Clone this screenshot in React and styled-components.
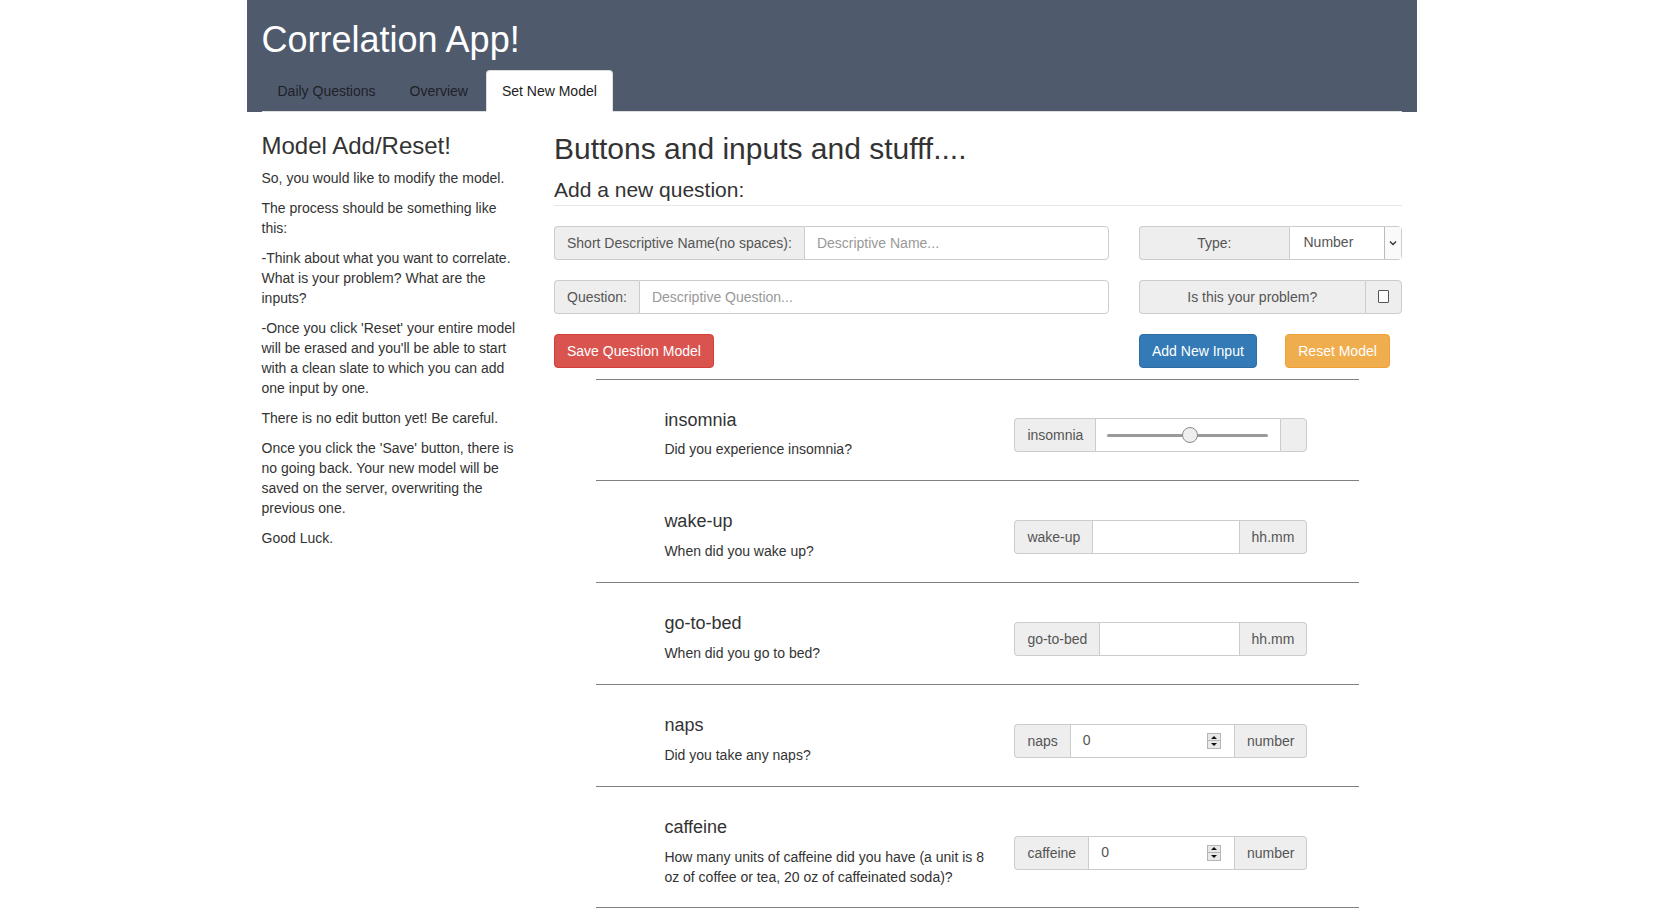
import React from "react";
import styled, { createGlobalStyle } from "styled-components";

const GlobalStyle = createGlobalStyle`
  html, body { margin: 0; padding: 0; background: #fff; }
  body {
    font-family: "Liberation Sans", Arial, Helvetica, sans-serif;
    font-size: 14px;
    line-height: 1.428571;
    color: #333;
  }
  * { box-sizing: border-box; }
`;

const Container = styled.div`
  width: 1170px;
  margin: 0 auto;
  padding: 0 15px;
`;

const Header = styled(Container)`
  display: flow-root;
  background: #505a6d;
`;

const AppTitle = styled.h1`
  margin: 20px 0 10px;
  font-size: 36px;
  font-weight: 500;
  line-height: 1.1;
  color: #fff;
`;

const Tabs = styled.ul`
  display: flex;
  margin: 0;
  padding: 0;
  list-style: none;
  border-bottom: 1px solid #ddd;
`;

const Tab = styled.li`
  margin-bottom: -1px;
`;

const TabLink = styled.a`
  display: block;
  margin-right: 2px;
  padding: 10px 15px;
  line-height: 20px;
  border: 1px solid ${(p) => (p.$active ? "#ddd" : "transparent")};
  border-bottom-color: transparent;
  border-radius: 4px 4px 0 0;
  background: ${(p) => (p.$active ? "#fff" : "transparent")};
  color: ${(p) => (p.$active ? "#222" : "#1e2128")};
  text-decoration: none;
  cursor: pointer;
`;

const Main = styled(Container)`
  display: grid;
  grid-template-columns: 262.5px 1fr;
  column-gap: 30px;
  align-items: start;
`;

const Sidebar = styled.div`
  padding-top: 1px;
`;

const SideTitle = styled.h3`
  margin: 20px 0 10px;
  font-size: 24px;
  font-weight: 500;
  line-height: 1.1;
`;

const SideText = styled.p`
  margin: 0 0 10px;
`;

const Content = styled.div``;

const PageTitle = styled.h2`
  margin: 20px 0 10px;
  font-size: 30px;
  font-weight: 500;
  line-height: 1.1;
`;

const Legend = styled.div`
  margin-bottom: 20px;
  font-size: 21px;
  line-height: 30px;
  color: #333;
  border-bottom: 1px solid #e5e5e5;
`;

const FormGrid = styled.div`
  display: grid;
  grid-template-columns: 555px 262.5px;
  column-gap: 30px;
  row-gap: 20px;
`;

const InputGroup = styled.div`
  display: flex;
  height: 34px;
  width: ${(p) => p.$width || "auto"};
`;

const Addon = styled.span`
  display: flex;
  align-items: center;
  justify-content: center;
  flex: ${(p) => (p.$grow ? "1 1 auto" : "none")};
  width: ${(p) => p.$width || "auto"};
  padding: 6px 12px;
  font-size: 14px;
  line-height: 1;
  color: #555;
  background: #eee;
  border: 1px solid #ccc;
  white-space: nowrap;
  &:first-child {
    border-radius: 4px 0 0 4px;
    border-right: 0;
  }
  &:last-child {
    border-radius: 0 4px 4px 0;
    border-left: ${(p) => (p.$divider ? "1px solid #ccc" : "0")};
  }
`;

const TextInput = styled.input`
  flex: 1 1 auto;
  min-width: 0;
  height: 34px;
  padding: 6px 12px;
  font-family: inherit;
  font-size: 14px;
  color: #555;
  background: #fff;
  border: 1px solid #ccc;
  outline: none;
  &:last-child { border-radius: 0 4px 4px 0; }
  &::placeholder { color: #999; }
`;

const SelectBox = styled.div`
  display: flex;
  align-items: stretch;
  width: 113px;
  flex: none;
  background: #fff;
  border: 1px solid #ccc;
  border-radius: 0 4px 4px 0;
  color: #555;
`;

const SelectText = styled.span`
  flex: 1;
  display: flex;
  align-items: center;
  padding-left: 14px;
`;

const SelectArrow = styled.span`
  width: 17px;
  display: flex;
  align-items: center;
  justify-content: center;
  border-left: 1px solid #bbb;
  background: #fafafa;
`;

const CheckBox = styled.span`
  display: block;
  width: 13px;
  height: 13px;
  background: #fff;
  border: 1px solid #555;
  border-radius: 1px;
`;

const ButtonRow = styled.div`
  display: grid;
  grid-template-columns: 146.25px auto;
  justify-items: start;
`;

const Button = styled.button`
  display: inline-block;
  height: 34px;
  padding: 6px 12px;
  font-family: inherit;
  font-size: 14px;
  line-height: 20px;
  color: #fff;
  border: 1px solid ${(p) => p.$border};
  border-radius: 4px;
  background: ${(p) => p.$bg};
  cursor: pointer;
`;

const ItemList = styled.div`
  width: 90%;
  margin: 11px auto 0;
  border-top: 1px solid #808080;
`;

const Item = styled.div`
  display: flex;
  align-items: center;
  padding: 21px 0 10px 68px;
  border-bottom: 1px solid #808080;
`;

const ItemText = styled.div`
  flex: none;
  width: 335px;
  margin-right: 15px;
`;

const ItemTitle = styled.h4`
  margin: 10px 0;
  font-size: 18px;
  font-weight: 500;
  line-height: 1.1;
`;

const ItemQuestion = styled.p`
  margin: 0 0 10px;
`;

const SliderCell = styled.div`
  flex: 1 1 auto;
  display: flex;
  align-items: center;
  padding: 0 12px 0 11px;
  border: 1px solid #ccc;
  border-right: 0;
  background: #fff;
`;

const Track = styled.div`
  position: relative;
  flex: 1;
  height: 3px;
  background: #9a9a9a;
  border-radius: 2px;
`;

const Thumb = styled.span`
  position: absolute;
  top: 50%;
  width: 16px;
  height: 16px;
  margin: -8px 0 0 -8px;
  border-radius: 50%;
  background: #efefef;
  border: 1px solid #8a8a8a;
`;

const NumberField = styled.div`
  flex: 1 1 auto;
  display: flex;
  align-items: center;
  justify-content: space-between;
  padding: 0 13px 0 12px;
  border: 1px solid #ccc;
  background: #fff;
  color: #555;
`;

const Spinner = styled.span`
  display: flex;
  flex-direction: column;
  width: 14px;
  height: 16px;
  border: 1px solid #b5b5b5;
  background: #e8e8e8;
`;

const SpinHalf = styled.span`
  flex: 1;
  display: flex;
  align-items: center;
  justify-content: center;
  &:first-child { border-bottom: 1px solid #b5b5b5; }
  &::after {
    content: "";
    width: 0;
    height: 0;
    border-left: 3px solid transparent;
    border-right: 3px solid transparent;
    ${(p) => (p.$down ? "border-top: 3px solid #111;" : "border-bottom: 3px solid #111;")}
  }
`;

const items = [
  { name: "insomnia", question: "Did you experience insomnia?", kind: "slider", value: 51 },
  { name: "wake-up", question: "When did you wake up?", kind: "time" },
  { name: "go-to-bed", question: "When did you go to bed?", kind: "time" },
  { name: "naps", question: "Did you take any naps?", kind: "number" },
  {
    name: "caffeine",
    question: "How many units of caffeine did you have (a unit is 8 oz of coffee or tea, 20 oz of caffeinated soda)?",
    kind: "number",
  },
];

function ItemControl({ item }) {
  if (item.kind === "slider") {
    return (
      <InputGroup $width="293px">
        <Addon>{item.name}</Addon>
        <SliderCell>
          <Track>
            <Thumb style={{ left: `${item.value}%` }} />
          </Track>
        </SliderCell>
        <Addon $width="27px" $divider />
      </InputGroup>
    );
  }
  if (item.kind === "time") {
    return (
      <InputGroup $width="293px">
        <Addon>{item.name}</Addon>
        <NumberField />
        <Addon>hh.mm</Addon>
      </InputGroup>
    );
  }
  return (
    <InputGroup $width="293px">
      <Addon>{item.name}</Addon>
      <NumberField>
        <span>0</span>
        <Spinner>
          <SpinHalf />
          <SpinHalf $down />
        </Spinner>
      </NumberField>
      <Addon>number</Addon>
    </InputGroup>
  );
}

export default function App() {
  return (
    <>
      <GlobalStyle />
      <Header>
        <AppTitle>Correlation App!</AppTitle>
        <Tabs>
          <Tab><TabLink>Daily Questions</TabLink></Tab>
          <Tab><TabLink>Overview</TabLink></Tab>
          <Tab><TabLink $active>Set New Model</TabLink></Tab>
        </Tabs>
      </Header>
      <Main>
        <Sidebar>
          <SideTitle>Model Add/Reset!</SideTitle>
          <SideText>So, you would like to modify the model.</SideText>
          <SideText>The process should be something like this:</SideText>
          <SideText>-Think about what you want to correlate. What is your problem? What are the inputs?</SideText>
          <SideText>-Once you click 'Reset' your entire model will be erased and you'll be able to start with a clean slate to which you can add one input by one.</SideText>
          <SideText>There is no edit button yet! Be careful.</SideText>
          <SideText>Once you click the 'Save' button, there is no going back. Your new model will be saved on the server, overwriting the previous one.</SideText>
          <SideText>Good Luck.</SideText>
        </Sidebar>
        <Content>
          <PageTitle>Buttons and inputs and stufff....</PageTitle>
          <Legend>Add a new question:</Legend>
          <FormGrid>
            <InputGroup>
              <Addon>Short Descriptive Name(no spaces):</Addon>
              <TextInput placeholder="Descriptive Name..." readOnly />
            </InputGroup>
            <InputGroup>
              <Addon $grow>Type:</Addon>
              <SelectBox>
                <SelectText>Number</SelectText>
                <SelectArrow>
                  <svg width="8" height="6" viewBox="0 0 8 6">
                    <path d="M1 1.5 L4 4.5 L7 1.5" fill="none" stroke="#333" strokeWidth="1.4" />
                  </svg>
                </SelectArrow>
              </SelectBox>
            </InputGroup>
            <InputGroup>
              <Addon>Question:</Addon>
              <TextInput placeholder="Descriptive Question..." readOnly />
            </InputGroup>
            <InputGroup>
              <Addon $grow>Is this your problem?</Addon>
              <Addon $width="37px" $divider>
                <CheckBox />
              </Addon>
            </InputGroup>
            <div>
              <Button $bg="#d9534f" $border="#d43f3a">Save Question Model</Button>
            </div>
            <ButtonRow>
              <Button $bg="#337ab7" $border="#2e6da4">Add New Input</Button>
              <Button $bg="#f0ad4e" $border="#eea236">Reset Model</Button>
            </ButtonRow>
          </FormGrid>
          <ItemList>
            {items.map((item) => (
              <Item key={item.name}>
                <ItemText>
                  <ItemTitle>{item.name}</ItemTitle>
                  <ItemQuestion>{item.question}</ItemQuestion>
                </ItemText>
                <ItemControl item={item} />
              </Item>
            ))}
          </ItemList>
        </Content>
      </Main>
    </>
  );
}
